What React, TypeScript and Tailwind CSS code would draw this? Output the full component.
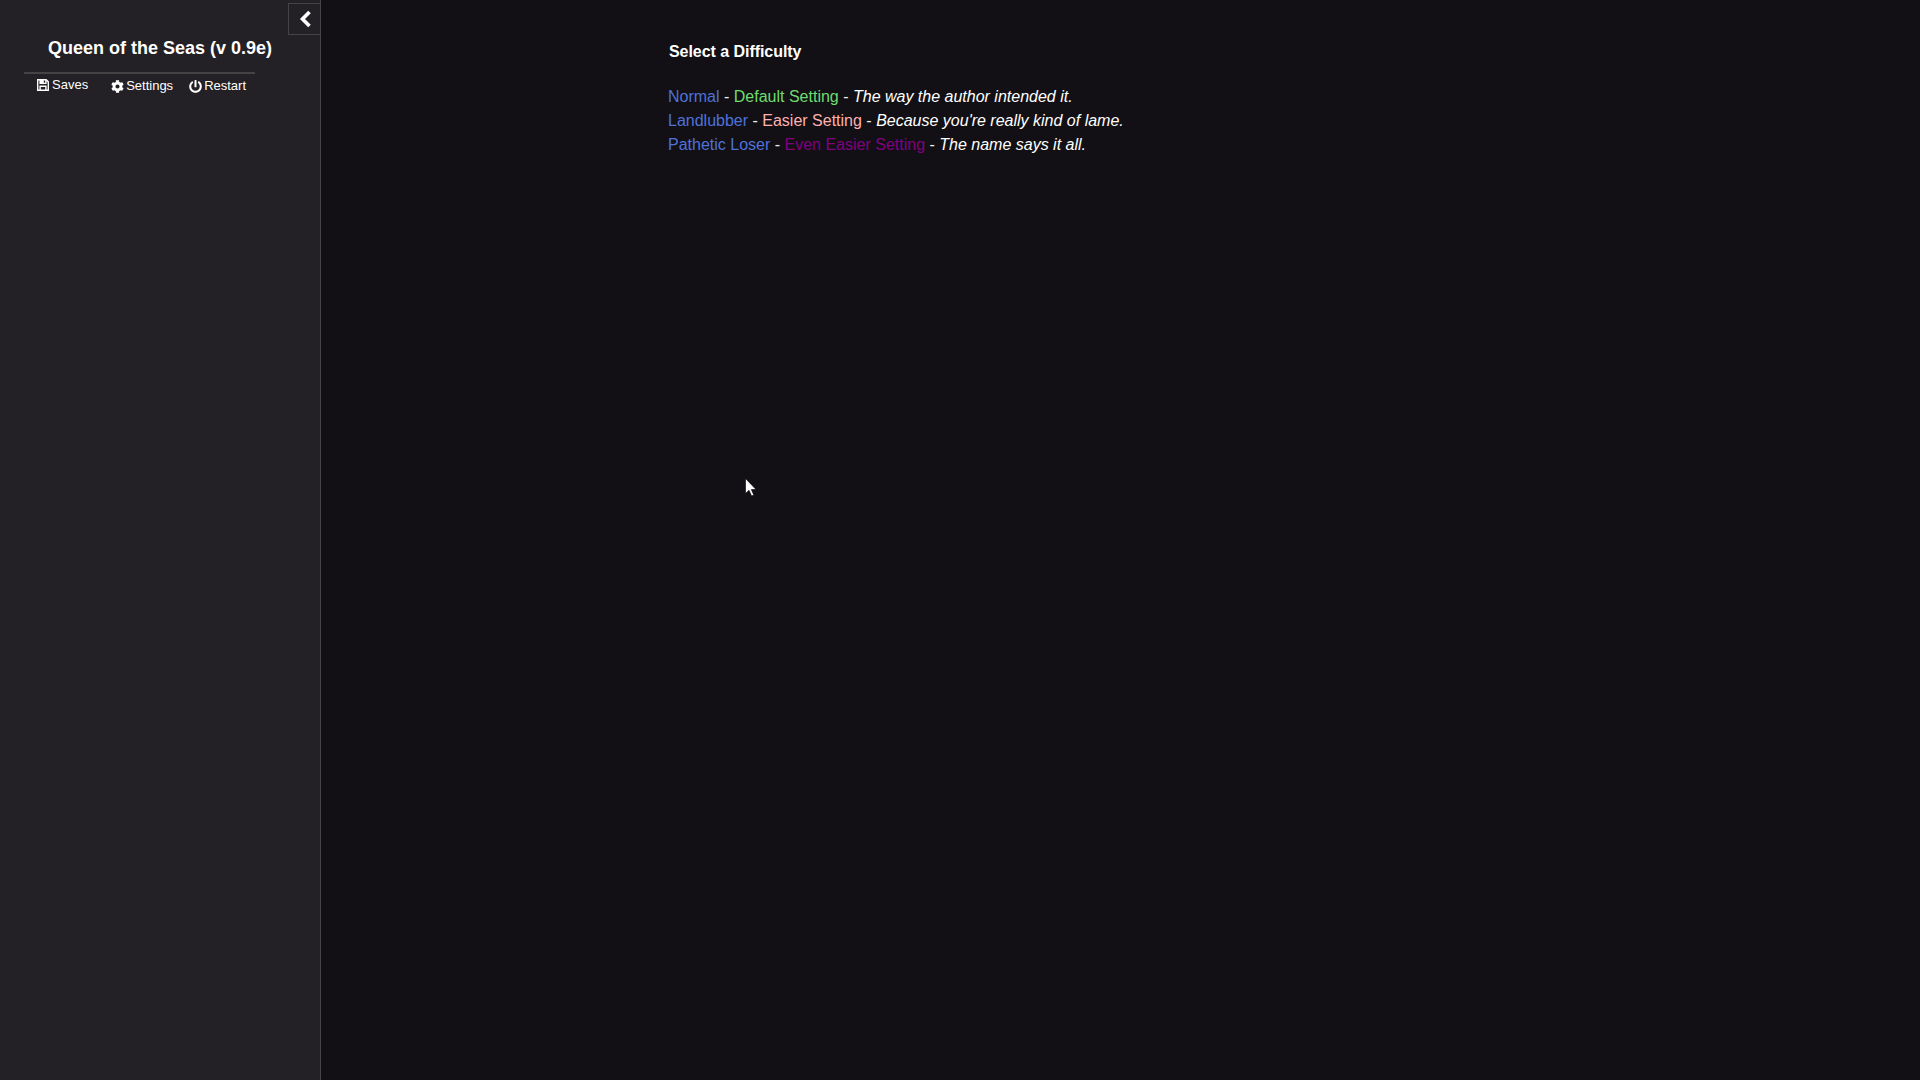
import { FaCog, FaPowerOff } from "react-icons/fa";

export default function App() {
  return (
    <div className="relative flex h-[1080px] w-[1920px] overflow-hidden bg-[#121014] font-['Liberation_Sans',Arial,sans-serif] text-[16px] leading-[24px] text-[#eeeeee]">
      <aside className="relative flex h-full w-[321px] shrink-0 flex-col border-r border-[#444444] bg-[#232125]">
        <button className="absolute right-0 top-[3px] flex h-[32px] w-[32px] items-center justify-center border border-r-0 border-[#444444] text-white">
          <svg width="13" height="18" viewBox="0 0 13 18" className="ml-[1px]">
            <path d="M10.5 2 L3.5 9 L10.5 16" fill="none" stroke="#ffffff" strokeWidth="3.6" />
          </svg>
        </button>
        <h1 className="mt-[36px] text-center text-[18px] font-bold leading-[24px] text-white">Queen of the Seas (v 0.9e)</h1>
        <nav className="ml-[24px] mt-[12px] flex h-[26px] w-[231px] border-t-2 border-[#444444] text-[13px] leading-[20px] text-white">
          <span className="ml-[13px] -mt-[2px] flex items-center gap-[3px]">
            <svg width="12" height="12" viewBox="0 0 12 12">
              <path fillRule="evenodd" fill="#ffffff" d="M0 0 H9.5 L12 2.5 V12 H0 Z M1.4 1.4 V10.6 H2.4 V6.6 H9.6 V10.6 H10.6 V3.2 L9.6 2.2 V5 H2.4 V1.4 Z M3.8 8 V10.6 H8.2 V8 Z M6.8 1.4 V3.8 H8.2 V1.4 Z" />
            </svg>
            Saves
          </span>
          <span className="ml-[23px] flex items-center gap-[2px]"><FaCog className="text-[13px]" />Settings</span>
          <span className="ml-[16px] flex items-center gap-[2px]"><FaPowerOff className="text-[13px]" />Restart</span>
        </nav>
      </aside>
      <main className="flex-1 pl-[347px] pt-[40px]">
        <p className="ml-[1px] font-bold tracking-[-0.05px] text-white">Select a Difficulty</p>
        <div className="mt-[21px]">
          <p><span className="text-[#4f72d9]">Normal</span> - <span className="text-[#6fdc6f]">Default Setting</span> - <em className="text-white">The way the author intended it.</em></p>
          <p><span className="text-[#4f72d9]">Landlubber</span> - <span className="text-[#ffb0b0]">Easier Setting</span> - <em className="text-white">Because you're really kind of lame.</em></p>
          <p><span className="text-[#4f72d9]">Pathetic Loser</span> - <span className="text-[#800080]">Even Easier Setting</span> - <em className="text-white">The name says it all.</em></p>
        </div>
      </main>
      <svg className="absolute left-[745px] top-[478px]" width="12" height="19" viewBox="0 0 12 19">
        <path d="M0.5 0.5 V15.5 L4 12.2 L6.6 18 L8.8 17 L6.3 11.5 H11 Z" fill="#ffffff" stroke="#000000" strokeWidth="0.6" />
      </svg>
    </div>
  );
}
